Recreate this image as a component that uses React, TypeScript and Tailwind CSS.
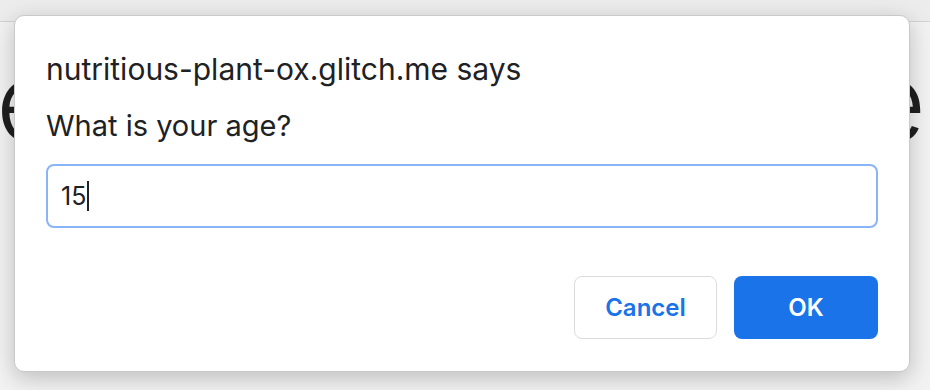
import React from 'react';

const font = { fontFamily: 'Inter, "Noto Sans", "Liberation Sans", sans-serif' };

const PromptDialog: React.FC = () => {
  return (
    <div className="absolute left-[14px] top-[15px] w-[896px] h-[357px] bg-white rounded-[10px] border border-[#c9c9c9] shadow-[0_6px_22px_rgba(0,0,0,0.22)] flex flex-col px-[31px] pt-[35px] pb-[32px]">
      <div className="text-[30px] leading-[36px] text-[#202124]">nutritious-plant-ox.glitch.me says</div>
      <div className="mt-[22px] text-[29px] leading-[34px] text-[#202124]">What is your age?</div>
      <div className="mt-[21px] h-[64px] rounded-[8px] border-2 border-[#8ab4f8] flex items-center pl-[13px]">
        <span className="text-[25px] leading-[30px] text-[#202124]">15</span>
        <span className="w-[2px] h-[30px] bg-[#202124] ml-[1px]" />
      </div>
      <div className="mt-[48px] flex justify-end gap-[17px]">
        <button className="w-[143px] h-[63px] rounded-[8px] border border-[#dadce0] bg-white text-[#1a73e8] text-[24px] font-semibold">
          Cancel
        </button>
        <button className="w-[144px] h-[63px] rounded-[8px] bg-[#1a73e8] text-white text-[24px] font-semibold">
          OK
        </button>
      </div>
    </div>
  );
};

export default function App() {
  return (
    <div className="relative w-[930px] h-[390px] overflow-hidden bg-[#f2f2f2]" style={font}>
      <div className="h-[22px] bg-[#ececec] border-b border-[#d3d3d3]" />
      {/* page heading behind the dialog, only its edges show */}
      <div className="mt-[24px] flex justify-between -ml-[4px] pr-[4px] text-[110px] leading-none font-light text-[#1f1f1f]">
        <span>e</span>
        <span>e</span>
      </div>
      <PromptDialog />
    </div>
  );
}
